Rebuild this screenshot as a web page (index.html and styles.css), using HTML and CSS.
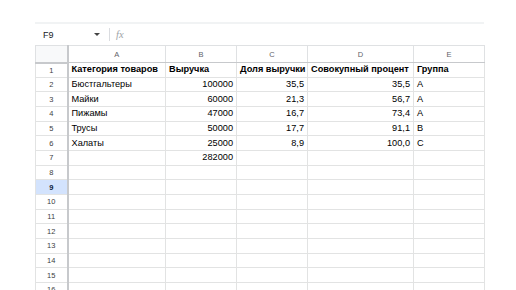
FILE: index.html
```html
<!DOCTYPE html>
<html lang="ru">
  <head>
    <meta charset="UTF-8" />
    <meta name="viewport" content="width=device-width, initial-scale=1.0" />
    <title>ABC-анализ</title>
    <link rel="stylesheet" href="styles.css">
  </head>
  <body>
    <main class="sheet">
      <div class="top-band"></div>
      <div class="formula-bar">
        <span class="name-box">F9</span>
        <span class="name-arrow"></span>
        <span class="bar-sep"></span>
        <span class="fx">fx</span>
      </div>
      <table class="grid">
        <colgroup>
          <col class="c-num" />
          <col class="c-a" />
          <col class="c-b" />
          <col class="c-c" />
          <col class="c-d" />
          <col class="c-e" />
        </colgroup>
        <thead>
          <tr>
            <th class="corner"></th>
            <th>A</th>
            <th>B</th>
            <th>C</th>
            <th>D</th>
            <th>E</th>
          </tr>
        </thead>
        <tbody>
          <tr>
            <td class="rn">1</td>
            <td class="b">Категория товаров</td>
            <td class="b">Выручка</td>
            <td class="b">Доля выручки</td>
            <td class="b">Совокупный процент</td>
            <td class="b">Группа</td>
          </tr>
          <tr>
            <td class="rn">2</td>
            <td>Бюстгальтеры</td>
            <td class="n">100000</td>
            <td class="n">35,5</td>
            <td class="n">35,5</td>
            <td>A</td>
          </tr>
          <tr>
            <td class="rn">3</td>
            <td>Майки</td>
            <td class="n">60000</td>
            <td class="n">21,3</td>
            <td class="n">56,7</td>
            <td>A</td>
          </tr>
          <tr>
            <td class="rn">4</td>
            <td>Пижамы</td>
            <td class="n">47000</td>
            <td class="n">16,7</td>
            <td class="n">73,4</td>
            <td>A</td>
          </tr>
          <tr>
            <td class="rn">5</td>
            <td>Трусы</td>
            <td class="n">50000</td>
            <td class="n">17,7</td>
            <td class="n">91,1</td>
            <td>B</td>
          </tr>
          <tr>
            <td class="rn">6</td>
            <td>Халаты</td>
            <td class="n">25000</td>
            <td class="n">8,9</td>
            <td class="n">100,0</td>
            <td>C</td>
          </tr>
          <tr>
            <td class="rn">7</td>
            <td></td>
            <td class="n">282000</td>
            <td></td>
            <td></td>
            <td></td>
          </tr>
          <tr><td class="rn">8</td><td></td><td></td><td></td><td></td><td></td></tr>
          <tr><td class="rn active">9</td><td></td><td></td><td></td><td></td><td></td></tr>
          <tr><td class="rn">10</td><td></td><td></td><td></td><td></td><td></td></tr>
          <tr><td class="rn">11</td><td></td><td></td><td></td><td></td><td></td></tr>
          <tr><td class="rn">12</td><td></td><td></td><td></td><td></td><td></td></tr>
          <tr><td class="rn">13</td><td></td><td></td><td></td><td></td><td></td></tr>
          <tr><td class="rn">14</td><td></td><td></td><td></td><td></td><td></td></tr>
          <tr><td class="rn">15</td><td></td><td></td><td></td><td></td><td></td></tr>
          <tr><td class="rn">16</td><td></td><td></td><td></td><td></td><td></td></tr>
        </tbody>
      </table>
    </main>
  </body>
</html>
```

FILE: styles.css
```css
*,
*::before,
*::after {
  box-sizing: border-box;
}

body {
  margin: 0;
  background: #fff;
  font-family: "Liberation Sans", Arial, sans-serif;
  color: #000;
  overflow: hidden;
}

.sheet {
  width: 449px;
  margin: 22px 0 0 35px;
}

.top-band {
  height: 2px;
  background: #f1f3f4;
}

/* name box + formula input */
.formula-bar {
  height: 21px;
  display: flex;
  align-items: center;
  font-size: 9px;
  color: #202124;
}

.name-box {
  width: 59px;
  padding-left: 8px;
}

.name-arrow {
  width: 0;
  height: 0;
  border-left: 3px solid transparent;
  border-right: 3px solid transparent;
  border-top: 3px solid #444;
}

.bar-sep {
  width: 1px;
  height: 13px;
  margin-left: 9px;
  background: #dadce0;
}

.fx {
  margin-left: 6px;
  font-family: "Liberation Serif", serif;
  font-style: italic;
  font-size: 10.5px;
  color: #a0a4a8;
}

.grid {
  border-collapse: collapse;
  table-layout: fixed;
  width: 449px;
  font-size: 9.2px;
}

.c-num { width: 32px; }
.c-a { width: 98px; }
.c-b { width: 71px; }
.c-c { width: 71px; }
.c-d { width: 106px; }
.c-e { width: 71px; }

.grid th {
  height: 17px;
  padding: 0;
  font-weight: normal;
  font-size: 7.5px;
  color: #5f6368;
  text-align: center;
  background: #fff;
  border: 1px solid #dfe1e3;
  border-bottom-color: #c7c9cc;
}

.grid th.corner {
  background: #f8f9fa;
  border-right: 2px solid #c7c9cc;
  border-bottom: 2px solid #c7c9cc;
}

.grid td {
  height: 14.67px;
  padding: 0 3px;
  line-height: 13px;
  white-space: nowrap;
  overflow: hidden;
  border: 1px solid #e2e3e3;
}

.grid td.rn {
  padding: 0;
  text-align: center;
  font-size: 7.5px;
  color: #3c4043;
  border-right: 2px solid #c7c9cc;
}

.grid td.rn.active {
  background: #d3e3fd;
  color: #0b1c3c;
  font-weight: bold;
}

.grid td.b {
  font-weight: bold;
}

.grid td.n {
  text-align: right;
}
```
